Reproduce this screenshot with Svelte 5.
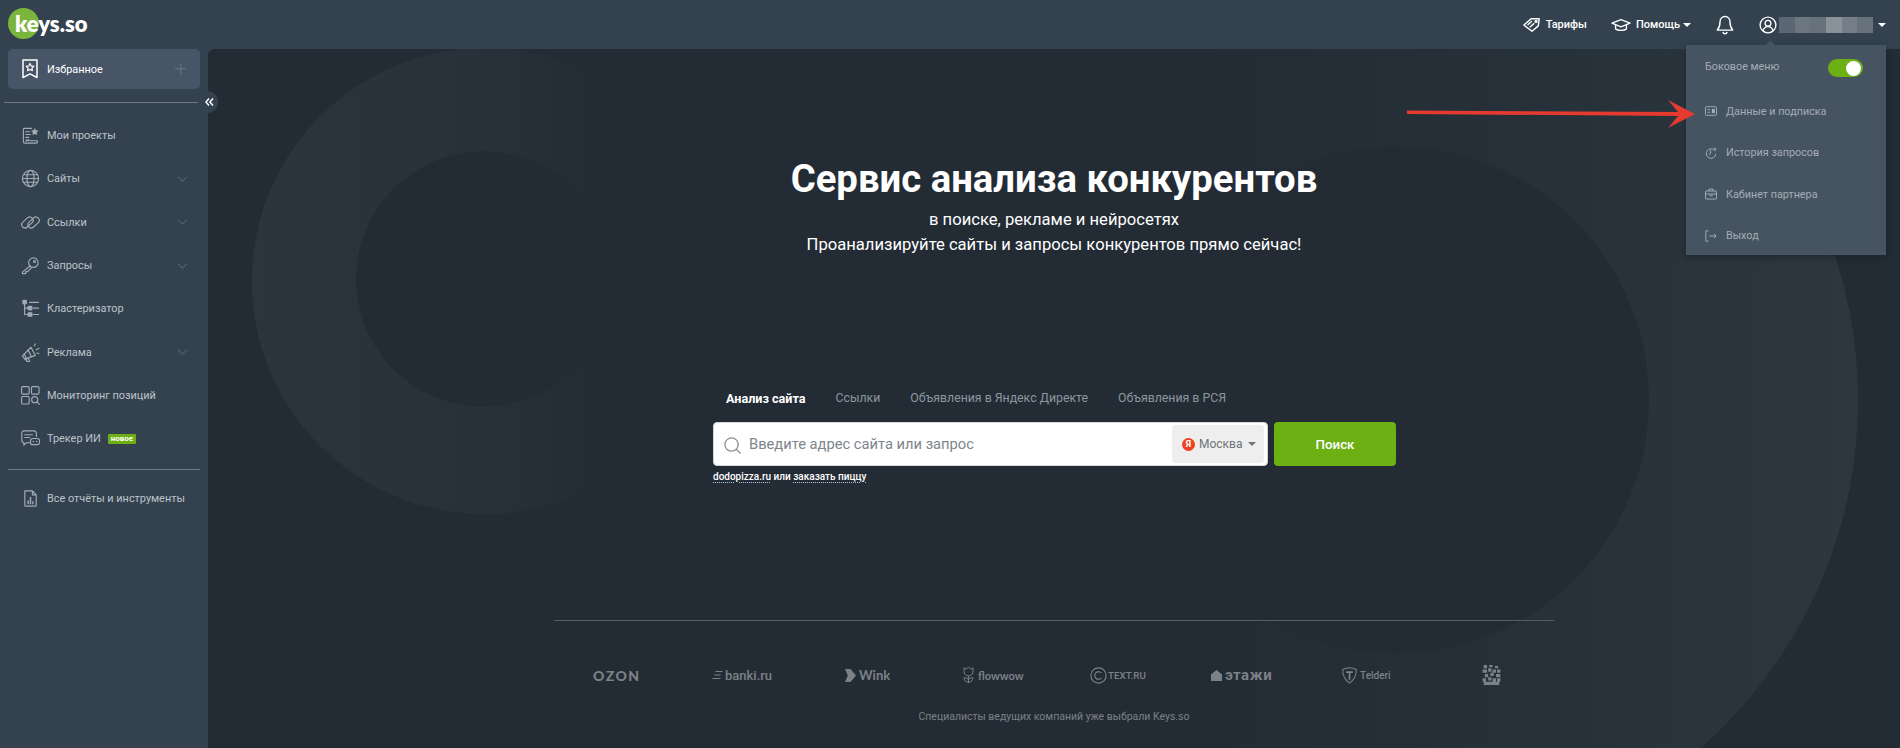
<script>
  const nav = [
    { label: 'Мои проекты', icon: 'projects' },
    { label: 'Сайты', icon: 'globe', more: true },
    { label: 'Ссылки', icon: 'link', more: true },
    { label: 'Запросы', icon: 'key', more: true },
    { label: 'Кластеризатор', icon: 'cluster' },
    { label: 'Реклама', icon: 'ads', more: true },
    { label: 'Мониторинг позиций', icon: 'monitor' },
    { label: 'Трекер ИИ', icon: 'chat', badge: 'новое' }
  ];
  const tabs = ['Анализ сайта', 'Ссылки', 'Объявления в Яндекс Директе', 'Объявления в РСЯ'];
  const blur = [0.2, 0.28, 0.25, 0.42, 0.32, 0.25];
</script>

{#snippet navIcon(name)}
  <svg class="nav-icon" viewBox="0 0 20 20" fill="none" stroke="currentColor" stroke-width="1.2" stroke-linecap="round" stroke-linejoin="round">
    {#if name === 'projects'}
      <path d="M11 2.500H3.500a1 1 0 0 0-1 1V16.500a1.500 1.500 0 0 0 1.500 1.500H16a1.500 1.500 0 0 0 1-2.500H7.500V14a1 1 0 0 1-2 .5V16M5 6h4M5 9h5M5 12h3" />
      <path d="M14.500 2l1.300 2.600 2.700.4-2 1.900.5 2.700-2.500-1.300-2.500 1.300.5-2.700-2-1.900 2.700-.4z" fill="currentColor" stroke="none" />
    {:else if name === 'globe'}
      <circle cx="10" cy="10" r="8.500" /><ellipse cx="10" cy="10" rx="3.800" ry="8.500" /><path d="M1.500 10h17M2.700 6h14.600M2.700 14h14.600" />
    {:else if name === 'link'}
      <rect x="0" y="6.500" width="13.500" height="7" rx="3.500" transform="rotate(-42 6.700 10)" />
      <rect x="6.500" y="6.500" width="13.500" height="7" rx="3.500" transform="rotate(-42 13.200 10)" />
    {:else if name === 'key'}
      <circle cx="13" cy="7" r="5" /><circle cx="14.200" cy="5.800" r="1" /><path d="M9.500 10.500 1.500 17v1.500h3.500v-2h2l3.800-4" />
    {:else if name === 'cluster'}
      <rect x="2" y="1.500" width="3.600" height="3.600" rx=".6" fill="currentColor" /><rect x="7.500" y="7.800" width="4" height="3.600" rx=".6" fill="currentColor" /><rect x="7.500" y="14.500" width="4" height="3.600" rx=".6" fill="currentColor" />
      <path d="M3.800 5.100V16.300H7.500M3.800 9.600h3.700M9 3.500h9.500M13 9.600h5.500M13 16.300h5.500" />
    {:else if name === 'ads'}
      <path d="M1.500 13.500 10.500 4.500l4.500 8.500L4 17z" /><path d="M4.500 17l2 2.500h2.500l-1.200-3.800M3.500 11.500l2.500 5.500M7.500 7.500l3.500 7" />
      <path d="M14 3l1-2M16 7l3-1.500M16.500 10.500l2.500.5" />
    {:else if name === 'monitor'}
      <rect x=".6" y=".6" width="8" height="8" rx="1.400" /><rect x="11" y=".6" width="8" height="8" rx="1.400" /><rect x=".6" y="11" width="8" height="8" rx="1.400" />
      <circle cx="14.400" cy="14.400" r="3.200" /><path d="M16.800 16.800 19.400 19.400" />
    {:else if name === 'chat'}
      <path d="M9 14.500H6l-3 2.400v-2.600A2.500 2.500 0 0 1 .8 12V4.500A2.500 2.500 0 0 1 3.300 2h10.400a2.500 2.500 0 0 1 2.500 2.500V8" />
      <path d="M4 6h8M4 9h5" />
      <rect x="10" y="10" width="9.500" height="6.500" rx="2.400" /><path d="M13 13.200h.01M16.500 13.200h.01" stroke-width="1.600" />
    {:else if name === 'doc'}
      <path d="M4 2h8l4 4.200V17a1 1 0 0 1-1 1H5a1 1 0 0 1-1-1V3a1 1 0 0 1 1-1zM12 2v4.200h4" />
      <path d="M7.500 15.500v-3M10 15.500V9M12.500 15.500v-2" stroke-width="1.500" />
    {/if}
  </svg>
{/snippet}

<div class="page">
  <header class="topbar">
    <div class="logo">
      <span class="logo-dot"></span>
      <span class="logo-text">keys.so</span>
    </div>
    <nav class="top-actions">
      <a class="top-link">
        <svg class="top-icon" viewBox="0 0 20 20" fill="none" stroke="#fff" stroke-width="1.600" stroke-linejoin="round"><path d="M1 10 9 3h9l-1 8-7 6z" /><path d="M5 10l5-4.400M7.500 12.500l5-4.400" /><circle cx="14.500" cy="6" r="1" /></svg>
        Тарифы
      </a>
      <a class="top-link help">
        <svg class="top-icon wide" viewBox="0 0 22 20" fill="none" stroke="#fff" stroke-width="1.500" stroke-linejoin="round"><path d="M1 8l10-4 10 4-10 4z" /><path d="M5 10v4.500c2 2 10 2 12 0V10" /></svg>
        Помощь
        <span class="caret"></span>
      </a>
      <svg class="bell" viewBox="0 0 18 20" fill="none" stroke="#fff" stroke-width="1.400" stroke-linejoin="round"><path d="M9 1.500c-3.200 0-5 2.600-5 5.600 0 4-1 6.200-2.700 8h15.400c-1.700-1.800-2.700-4-2.700-8 0-3-1.800-5.600-5-5.600z" /><path d="M6.800 15.500a2.300 2.500 0 0 0 4.400 0" transform="translate(0 1.500)" /></svg>
      <div class="user">
        <svg class="avatar" viewBox="0 0 20 20" fill="none" stroke="#fff" stroke-width="1.500"><circle cx="10" cy="10" r="8.800" /><circle cx="10" cy="8" r="3.200" /><path d="M4.500 16.500c.6-3 2.600-4.700 5.500-4.700s4.900 1.700 5.500 4.700" /></svg>
        <div class="blurred">
          {#each blur as o}<span style="opacity:{o}"></span>{/each}
        </div>
        <span class="caret"></span>
      </div>
    </nav>
  </header>

  <div class="body">
    <aside class="sidebar">
      <div class="fav">
        <svg class="fav-icon" viewBox="0 0 16 20" fill="none" stroke="#fff" stroke-width="1.500" stroke-linejoin="round"><path d="M1 1h14v17.500l-7-3.600-7 3.600z" /><path d="M8 4.500l1.200 2.400 2.600.4-1.900 1.800.5 2.600L8 10.500l-2.400 1.200.5-2.600-1.900-1.800 2.600-.4z" stroke-width="1.200" /></svg>
        <span class="fav-label">Избранное</span>
        <span class="plus"></span>
      </div>
      <div class="collapse-row">
        <div class="rule"></div>
        <span class="collapse">
          <svg viewBox="0 0 9 8" width="9" height="8" fill="none" stroke="#fff" stroke-width="1.500"><path d="M4 .5.900 4 4 7.500M8 .5 4.900 4 8 7.500" /></svg>
        </span>
      </div>
      <ul class="nav">
        {#each nav as item}
          <li>
            {@render navIcon(item.icon)}
            <span class="nav-label">{item.label}</span>
            {#if item.badge}<span class="badge">{item.badge}</span>{/if}
            {#if item.more}
              <svg class="chev" viewBox="0 0 12 7" fill="none" stroke="currentColor" stroke-width="1"><path d="M1 1l5 5 5-5" /></svg>
            {/if}
          </li>
        {/each}
      </ul>
      <div class="rule second"></div>
      <div class="all">
        {@render navIcon('doc')}
        <span class="nav-label">Все отчёты и инструменты</span>
      </div>
    </aside>

    <main class="main">
      <svg class="backdrop" viewBox="0 0 1692 699">
        <defs>
          <linearGradient id="ringL" gradientUnits="userSpaceOnUse" x1="42" y1="0" x2="390" y2="0">
            <stop offset="0" stop-color="#2b353e" />
            <stop offset=".7" stop-color="#28313a" />
            <stop offset="1" stop-color="#232c35" />
          </linearGradient>
          <linearGradient id="ringR" gradientUnits="userSpaceOnUse" x1="1000" y1="0" x2="1650" y2="0">
            <stop offset="0" stop-color="#232c35" />
            <stop offset=".55" stop-color="#27313a" />
            <stop offset="1" stop-color="#2d3740" />
          </linearGradient>
        </defs>
        <path fill="url(#ringL)" fill-rule="evenodd" d="M44 232a233 233 0 1 0 466 0a233 233 0 1 0-466 0ZM148 230a128 128 0 1 0 256 0a128 128 0 1 0-256 0Z" />
        <path fill="url(#ringR)" fill-rule="evenodd" d="M724 351a463 463 0 1 0 926 0a463 463 0 1 0-926 0ZM933 351a254 254 0 1 0 508 0a254 254 0 1 0-508 0Z" />
      </svg>

      <section class="hero">
        <h1>Сервис анализа конкурентов</h1>
        <p class="sub">в поиске, рекламе и нейросетях</p>
        <p class="sub">Проанализируйте сайты и запросы конкурентов прямо сейчас!</p>
      </section>

      <section class="search">
        <div class="tabs">
          {#each tabs as t, i}
            <span class:active={i === 0}>{t}</span>
          {/each}
        </div>
        <div class="search-row">
          <div class="field">
            <svg class="glass" viewBox="0 0 20 20" fill="none" stroke="#8a9299" stroke-width="1.400"><circle cx="9" cy="9" r="7" /><path d="M14 14l4.500 4.500" /></svg>
            <span class="placeholder">Введите адрес сайта или запрос</span>
            <div class="region">
              <span class="ya">Я</span>
              <span>Москва</span>
              <span class="caret grey"></span>
            </div>
          </div>
          <button class="go">Поиск</button>
        </div>
        <div class="hint"><u>dodopizza.ru</u> или <u>заказать пиццу</u></div>
      </section>

      <section class="clients">
        <div class="logos">
          <span class="cl ozon">OZON</span>
          <span class="cl banki"><svg viewBox="0 0 10 10" width="11" height="10" fill="none" stroke="#7b8187" stroke-width="1.200"><path d="M3 1.500h7M2 5h6M0 8.500h8" /></svg>banki.ru</span>
          <span class="cl wink"><svg viewBox="0 0 12 14" width="11" height="13"><path d="M0 0h6l6 7-6 7H0l3-7z" fill="#7b8187" /></svg>Wink</span>
          <span class="cl flow"><svg viewBox="0 0 14 20" width="13" height="18" fill="none" stroke="#7b8187" stroke-width="1.100"><path d="M2 2l2.500 1.500L7 1l2.500 2.500L12 2v4a5 5 0 0 1-10 0zM7 11v8M2 13c0 3 2 5 5 5 3 0 5-2 5-5-3 0-5 1-5 3 0-2-2-3-5-3z" /></svg>flowwow</span>
          <span class="cl text"><svg viewBox="0 0 20 20" width="17" height="17" fill="none" stroke="#7b8187" stroke-width="1.300"><circle cx="10" cy="10" r="9" /><path d="M13.500 7a4.500 4.500 0 1 0 0 6" /></svg>TEXT.RU</span>
          <span class="cl etazhi"><svg viewBox="0 0 12 12" width="11" height="11"><path d="M0 12V5l6-5 6 5v7z" fill="#7b8187" /></svg>этажи</span>
          <span class="cl telderi"><svg viewBox="0 0 20 20" width="17" height="17" fill="none" stroke="#7b8187" stroke-width="1.200"><path d="M2 3c5-2.500 11-2.500 16 0 0 7-2 12-8 16C4 15 2 10 2 3z" /><path d="M6 6h8M10 6v9" stroke-width="2" /></svg>Telderi</span>
          <svg class="qr" viewBox="0 0 16 18" width="19" height="20" fill="#7b8187"><path d="M1 0h3v3H1zM6 0h3v2H6zM11 1h3v2h-3zM0 4h4v3H0zM5 3h3v3H5zM9 4h3v3H9zM13 4h3v3h-3zM2 8h3v3H2zM7 7h3v3H7zM12 8h4v3h-4zM0 12h3v3H0zM5 11h3v3H5zM9 12h3v3H9zM13 12h3v3h-3zM1 15h14v3H1z" /></svg>
        </div>
        <p class="trust">Специалисты ведущих компаний уже выбрали Keys.so</p>
      </section>
    </main>
  </div>

  <div class="menu">
    <div class="menu-toggle">
      <span>Боковое меню</span>
      <span class="switch"><i></i></span>
    </div>
    <div class="menu-item">
      <svg viewBox="0 0 14 12" fill="none" stroke="currentColor" stroke-width="1.100"><rect x=".6" y="1" width="12.800" height="10" rx="1" /><path d="M3 4.500h3M3 7.500h3" /><rect x="8" y="3.500" width="3.500" height="5" fill="currentColor" stroke="none" /></svg>
      Данные и подписка
    </div>
    <div class="menu-item">
      <svg viewBox="0 0 14 14" fill="none" stroke="currentColor" stroke-width="1.100"><path d="M11.500 4.500A5.500 5.500 0 1 0 12.500 8" /><path d="M6.500 4v3.500l-2 1.500M10 1.500l2.500.2-.2 2.500" /></svg>
      История запросов
    </div>
    <div class="menu-item">
      <svg viewBox="0 0 14 13" fill="none" stroke="currentColor" stroke-width="1.100"><rect x=".6" y="3" width="12.800" height="9.400" rx=".6" /><path d="M4.500 3V.8h5V3M.6 6.500h12.800M5 8.500h4" /></svg>
      Кабинет партнера
    </div>
    <div class="menu-item">
      <svg viewBox="0 0 14 14" fill="none" stroke="currentColor" stroke-width="1.100"><path d="M4 1H1v12h3M5 7h8M10.500 4.500 13 7l-2.500 2.500" /></svg>
      Выход
    </div>
  </div>

  <svg class="pointer" viewBox="0 0 300 40" width="300" height="40">
    <path d="M2 13.500 273 15 263 3 290 17 263 31 273 19 2 17z" fill="#e53a2f" />
  </svg>
</div>

<style>
  :global(body) { margin: 0; background: #232c35; }
  .page {
    position: relative;
    width: 1900px;
    height: 748px;
    overflow: hidden;
    font-family: Roboto, "Liberation Sans", sans-serif;
    background: #344250;
    color: #fff;
  }
  .topbar {
    height: 49px;
    display: flex;
    justify-content: space-between;
    align-items: center;
    padding: 0 14px 0 8px;
    background: #344250;
  }
  .logo { position: relative; height: 31px; width: 90px; margin-top: -3px; }
  .logo-dot {
    position: absolute;
    left: 0;
    top: 0;
    width: 31px;
    height: 31px;
    border-radius: 50%;
    background: #7cb53c;
  }
  .logo-text {
    position: relative;
    display: block;
    padding-left: 7px;
    font: 800 22px/31px Lato, sans-serif;
  }
  .top-actions { display: flex; align-items: center; height: 100%; }
  .top-link {
    display: flex;
    align-items: center;
    gap: 5px;
    font-size: 11px;
    font-weight: 500;
    color: #fff;
    margin-right: 24px;
  }
  .help { margin-right: 25px; }
  .help .caret { margin-left: -2px; }
  .top-icon { width: 18px; height: 18px; }
  .top-icon.wide { width: 20px; height: 18px; }
  .caret {
    display: inline-block;
    width: 0;
    height: 0;
    border-left: 4.500px solid transparent;
    border-right: 4.500px solid transparent;
    border-top: 4.500px solid #fff;
  }
  .caret.grey { border-top-color: #6e757b; }
  .bell { width: 18px; height: 20px; margin-right: 25px; }
  .user { display: flex; align-items: center; }
  .avatar { width: 18px; height: 18px; }
  .blurred { display: flex; width: 94px; height: 16px; margin: 0 5px 0 2px; }
  .blurred span { flex: 1; background: #fff; }

  .body { display: flex; height: 699px; }
  .sidebar { position: relative; z-index: 2; width: 208px; flex: none; padding: 0 8px; box-sizing: border-box; }
  .fav {
    height: 40px;
    display: flex;
    align-items: center;
    padding: 0 14px;
    border-radius: 5px;
    background: #475567;
  }
  .fav-icon { width: 16px; height: 20px; margin-right: 9px; }
  .fav-label { flex: 1; font-size: 10.900px; color: #fff; }
  .plus {
    width: 11px;
    height: 11px;
    background:
      linear-gradient(#5f6c7c, #5f6c7c) center / 100% 1.500px no-repeat,
      linear-gradient(#5f6c7c, #5f6c7c) center / 1.500px 100% no-repeat;
  }
  .collapse-row { position: relative; margin: 13px 0 0 -4px; height: 1px; }
  .rule { height: 1px; background: #6f7983; width: 194px; }
  .collapse {
    position: absolute;
    left: 197px;
    top: -11px;
    width: 17px;
    height: 22px;
    border-radius: 0 11px 11px 0;
    background: #344250;
    display: flex;
    align-items: center;
    justify-content: center;
  }
  .nav {
    list-style: none;
    margin: 11px 0 0;
    padding: 0;
  }
  .nav li, .all {
    height: 43.300px;
    display: flex;
    align-items: center;
    padding-left: 14px;
    color: #bcc3ca;
    font-size: 10.900px;
  }
  .nav-icon { width: 19px; height: 19px; flex: none; color: #a2acb6; margin-right: 7px; margin-left: -1px; }
  .nav-label { white-space: nowrap; }
  .badge {
    margin-left: 7px;
    padding: 0 3px;
    height: 10px;
    line-height: 9.500px;
    border-radius: 1px;
    background: #6cb014;
    color: #fff;
    font-size: 8px;
    font-weight: 700;
  }
  .chev { width: 11px; height: 6px; margin-left: auto; margin-right: 12px; color: #6e7a86; }
  .rule.second { width: 192px; margin-top: 9px; background: #6f7b87; }
  .all { margin-top: 6px; }

  .main {
    position: relative;
    flex: 1;
    border-radius: 6px 0 0 0;
    background: #232c35;
    display: flex;
    flex-direction: column;
    align-items: center;
    overflow: hidden;
  }
  .backdrop { position: absolute; left: 0; top: 0; width: 1692px; height: 699px; }
  .hero, .search, .clients { position: relative; }
  .hero { margin-top: 107px; text-align: center; }
  h1 { margin: 0 0 5px; font-size: 38.300px; line-height: 46px; font-weight: 700; white-space: nowrap; }
  .sub { margin: 0; font-size: 16.600px; line-height: 25px; }
  .search { width: 683px; margin: 130px 0 0 1px; }
  .tabs { display: flex; gap: 30px; padding-left: 13px; height: 22px; align-items: center; font-size: 12.300px; color: #8d969e; }
  .tabs .active { color: #fff; font-weight: 700; font-size: 12.600px; }
  .search-row { display: flex; gap: 6px; margin-top: 13px; }
  .field {
    flex: 1;
    height: 44px;
    display: flex;
    align-items: center;
    background: #fff;
    border: 1px solid #cfd6dc;
    box-sizing: border-box;
    border-radius: 4px;
    padding: 0 3px 0 9px;
  }
  .glass { width: 19px; height: 19px; margin: 2px 7px 0 0; }
  .placeholder { flex: 1; color: #7d858c; font-size: 14.700px; }
  .region {
    width: 92px;
    height: 38px;
    background: #eee;
    border-radius: 4px;
    display: flex;
    align-items: center;
    gap: 4px;
    padding-left: 10px;
    box-sizing: border-box;
    color: #6f7479;
    font-size: 12px;
  }
  .ya {
    width: 13px;
    height: 13px;
    border-radius: 50%;
    background: #f0401f;
    color: #fff;
    font-size: 9px;
    font-weight: 700;
    text-align: center;
    line-height: 13px;
  }
  .region .caret { margin-left: 2px; }
  .go {
    width: 122px;
    height: 44px;
    border: 0;
    border-radius: 4px;
    background: #6cb014;
    color: #fff;
    font: 500 13.300px Roboto, sans-serif;
  }
  .hint { margin-top: 5px; font-size: 10px; font-weight: 500; color: #fff; }
  .hint u { text-decoration: underline dotted #a9c7e6; text-underline-offset: 2px; }

  .clients { width: 1000px; margin-top: 138px; border-top: 1px solid #555d65; }
  .logos {
    display: grid;
    grid-template-columns: 119px 133px 117px 128px 121px 130px 141px 1fr;
    align-items: center;
    height: 40px;
    margin-top: 34px;
    padding-left: 39px;
    color: #7b8187;
  }
  .cl { display: inline-flex; align-items: center; gap: 2px; white-space: nowrap; font-weight: 700; }
  .ozon { font: 900 14px Lato, sans-serif; letter-spacing: 1.500px; }
  .banki { font-size: 13px; font-weight: 500; }
  .wink { gap: 3px; font-size: 13px; font-weight: 700; font-family: Lato, sans-serif; }
  .flow { gap: 3px; font-size: 11px; font-weight: 700; font-family: Lato, sans-serif; }
  .text { gap: 1px; font-size: 9.800px; font-weight: 500; }
  .etazhi { gap: 3px; font-size: 15px; font-weight: 700; letter-spacing: .6px; }
  .telderi { gap: 2px; font-size: 10px; font-weight: 500; }
  .trust { margin: 15px 0 0; text-align: center; font-size: 10.500px; color: #7b8187; }

  .menu {
    position: absolute;
    left: 1686px;
    top: 45px;
    width: 200px;
    height: 210px;
    background: #465361;
    box-shadow: 0 2px 8px rgba(0, 0, 0, .25);
    padding: 0 23px 0 19px;
    box-sizing: border-box;
    color: #a4adb6;
    font-size: 10.800px;
  }
  .menu::before {
    content: "";
    position: absolute;
    left: 81px;
    top: -3px;
    width: 7px;
    height: 7px;
    background: #465361;
    transform: rotate(45deg);
  }
  .menu-toggle { display: flex; justify-content: space-between; align-items: center; height: 45.300px; padding-bottom: 3.300px; box-sizing: border-box; }
  .switch { width: 35px; height: 18px; border-radius: 9px; background: #6cb014; position: relative; margin-top: 4px; }
  .switch i { position: absolute; right: 2px; top: 1.500px; width: 15px; height: 15px; border-radius: 50%; background: #fff; }
  .menu-item { display: flex; align-items: center; gap: 9px; height: 41.600px; }
  .menu-item svg { width: 12px; height: 12px; flex: none; color: #a4b0bd; }
  .pointer { position: absolute; left: 1405px; top: 97px; }
</style>
